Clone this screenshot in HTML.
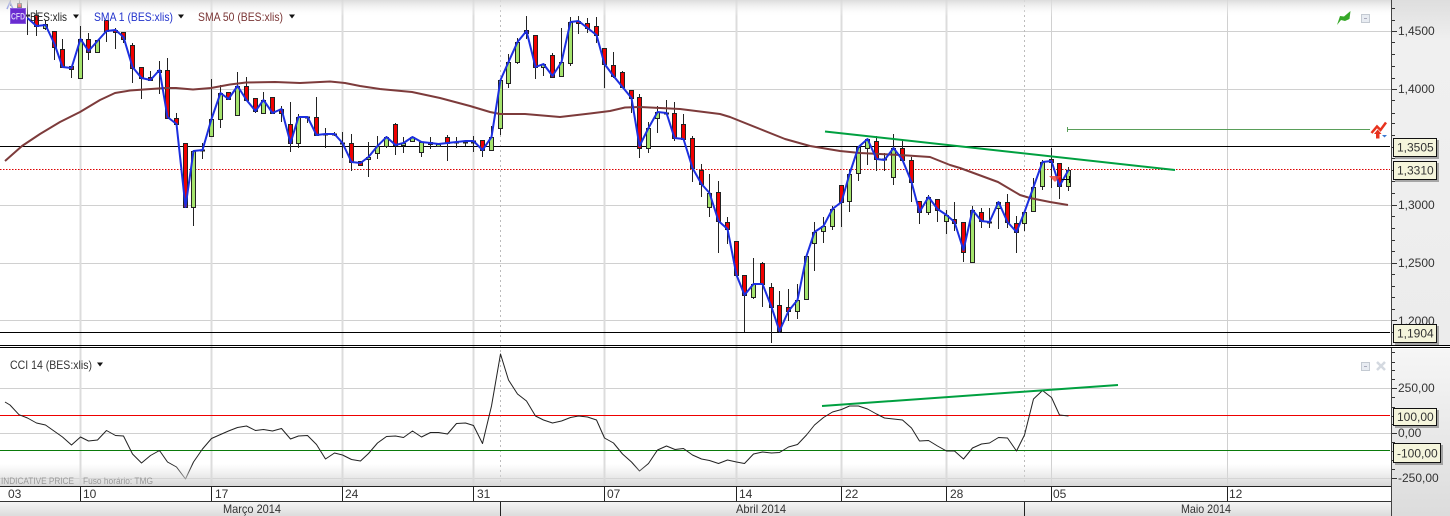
<!DOCTYPE html>
<html><head><meta charset="utf-8"><style>
html,body{margin:0;padding:0;background:#fff;width:1450px;height:516px;overflow:hidden}
svg{display:block}
text{font-family:"Liberation Sans",sans-serif;font-size:12px;fill:#333}
</style></head><body>
<svg width="1450" height="516" viewBox="0 0 1450 516" xmlns="http://www.w3.org/2000/svg">
<defs>
<linearGradient id="top" x1="0" y1="0" x2="0" y2="1"><stop offset="0" stop-color="#d8d8d8" stop-opacity=".9"/><stop offset="1" stop-color="#fff" stop-opacity="0"/></linearGradient>
<linearGradient id="bot" x1="0" y1="0" x2="0" y2="1"><stop offset="0" stop-color="#ddd" stop-opacity="0"/><stop offset="1" stop-color="#d6d6d6" stop-opacity=".95"/></linearGradient>
<linearGradient id="mon" x1="0" y1="0" x2="0" y2="1"><stop offset="0" stop-color="#f4f4f4"/><stop offset="1" stop-color="#dcdcdc"/></linearGradient>
<linearGradient id="ax1" x1="0" y1="0" x2="0" y2="1"><stop offset="0" stop-color="#dedede"/><stop offset=".12" stop-color="#f0f0f0"/><stop offset="1" stop-color="#ececec"/></linearGradient>
<linearGradient id="ax2" x1="0" y1="0" x2="0" y2="1"><stop offset="0" stop-color="#f6f6f6"/><stop offset="1" stop-color="#dcdcdc"/></linearGradient>
</defs>
<rect width="1450" height="516" fill="#fff"/>
<rect x="1392" y="0" width="58" height="345" fill="url(#ax1)"/>
<rect x="1392" y="349" width="58" height="167" fill="url(#ax2)"/>

<!-- grid -->
<path d="M0 31.5H1391M0 89.5H1391M0 205.5H1391M0 263.5H1391M0 320.5H1391M0 388.5H1391M0 433.5H1391M0 478.5H1391" stroke="#d0d0d0" fill="none"/>
<path d="M80.5 0V486M211.5 0V486M342.5 0V486M473.5 0V486M604.5 0V486M736.5 0V486M841.5 0V486M946.5 0V486" stroke="#dcdcdc" stroke-width="2" fill="none"/>
<path d="M1051.5 0V486M1227.5 0V486" stroke="#d0d0d0" fill="none"/>
<path d="M500.5 0V486M1024.5 0V486" stroke="#bbb" stroke-dasharray="2 3" fill="none"/>

<!-- horizontal levels -->
<path d="M0 146.5H1390M0 332.5H1390" stroke="#000" fill="none"/>
<path d="M0 169.5H1390" stroke="#d00" stroke-dasharray="1.5 1.5" fill="none"/>
<path d="M0 415.5H1390" stroke="#e00" fill="none"/>
<path d="M0 450.5H1390" stroke="#0a7a0a" fill="none"/>

<!-- wicks -->
<path stroke="#222" fill="none" d="M10.5 0V6M19.5 0V10M27.5 0V35M36.5 10V36M45.5 20V30M54.5 31V60M62.5 39V67M71.5 66V78M80.5 26V78M88.5 33V60M97.5 40V52M106.5 20V42M115.5 28V49M123.5 32V43M132.5 43V83M141.5 67V99M150.5 71V80M159.5 61V94M167.5 58V118M176.5 113V124M185.5 143V207M193.5 151V226M202.5 143V159M211.5 79V136M220.5 85V128M228.5 92V100M237.5 72V115M246.5 77V100M255.5 98V113M263.5 92V113M272.5 97V113M281.5 106V122M290.5 102V152M298.5 114V148M307.5 117V123M316.5 97V135M325.5 128V148M334.5 132V136M342.5 132V158M351.5 134V171M360.5 161V166M368.5 142V177M377.5 136V159M386.5 136V148M395.5 123V155M403.5 137V153M412.5 137V141M421.5 142V157M430.5 137V149M438.5 144V147M447.5 135V161M456.5 137V148M465.5 140V146M473.5 136V152M482.5 140V157M491.5 126V150M500.5 80V135M508.5 54V88M517.5 38V64M526.5 16V39M535.5 35V79M543.5 64V76M552.5 53V77M561.5 28V76M570.5 17V66M578.5 16V34M587.5 18V33M596.5 17V43M604.5 48V88M613.5 52V78M622.5 71V87M631.5 90V113M639.5 94V158M648.5 122V153M657.5 106V133M666.5 100V115M674.5 102V141M683.5 114V139M692.5 136V182M701.5 164V197M709.5 174V217M718.5 181V253M727.5 217V244M736.5 241V275M744.5 275V332M753.5 258V299M762.5 262V307M771.5 283V343M779.5 291V333M788.5 289V321M797.5 284V319M806.5 256V299M814.5 222V271M823.5 217V243M832.5 206V230M841.5 185V227M849.5 169V212M858.5 147V181M867.5 139V165M876.5 136V171M884.5 153V171M893.5 134V185M902.5 141V160M911.5 157V202M919.5 201V224M928.5 195V215M937.5 199V222M946.5 210V234M954.5 202V231M963.5 222V262M972.5 206V263M981.5 208V228M989.5 208V228M998.5 202V229M1007.5 194V228M1016.5 216V253M1024.5 212V231M1033.5 178V211M1042.5 160V190M1051.5 148V188M1059.5 163V199M1068.5 167V191"/>

<!-- red bodies -->
<path stroke="#222" fill="#f00000" d="M17.5 3.5h4v4h-4zM34.5 15.5h4v11h-4zM52.5 31.5h4v16h-4zM60.5 49.5h4v18h-4zM69.5 66.5h4v3h-4zM86.5 39.5h4v13h-4zM104.5 20.5h4v11h-4zM113.5 30.5h4v2h-4zM121.5 32.5h4v7h-4zM130.5 45.5h4v23h-4zM139.5 67.5h4v11h-4zM148.5 77.5h4v3h-4zM165.5 70.5h4v48h-4zM174.5 118.5h4v6h-4zM183.5 143.5h4v64h-4zM226.5 92.5h4v7h-4zM244.5 86.5h4v14h-4zM253.5 98.5h4v13h-4zM270.5 97.5h4v16h-4zM279.5 109.5h4v4h-4zM288.5 124.5h4v19h-4zM314.5 117.5h4v18h-4zM349.5 143.5h4v19h-4zM358.5 161.5h4v4h-4zM393.5 124.5h4v21h-4zM428.5 142.5h4v2h-4zM445.5 137.5h4v6h-4zM480.5 140.5h4v10h-4zM524.5 30.5h4v3h-4zM533.5 35.5h4v32h-4zM550.5 55.5h4v22h-4zM576.5 21.5h4v2h-4zM585.5 23.5h4v5h-4zM594.5 26.5h4v9h-4zM602.5 48.5h4v16h-4zM611.5 65.5h4v11h-4zM620.5 72.5h4v15h-4zM629.5 90.5h4v8h-4zM637.5 97.5h4v51h-4zM672.5 113.5h4v25h-4zM681.5 124.5h4v15h-4zM690.5 138.5h4v30h-4zM699.5 170.5h4v14h-4zM716.5 192.5h4v29h-4zM725.5 222.5h4v7h-4zM734.5 241.5h4v34h-4zM742.5 275.5h4v20h-4zM760.5 263.5h4v21h-4zM769.5 287.5h4v20h-4zM777.5 305.5h4v26h-4zM786.5 307.5h4v4h-4zM839.5 185.5h4v17h-4zM874.5 141.5h4v18h-4zM900.5 148.5h4v12h-4zM909.5 160.5h4v22h-4zM917.5 201.5h4v11h-4zM935.5 199.5h4v11h-4zM952.5 219.5h4v4h-4zM961.5 222.5h4v30h-4zM979.5 212.5h4v9h-4zM1005.5 202.5h4v20h-4zM1014.5 223.5h4v9h-4zM1049.5 159.5h4v3h-4zM1057.5 163.5h4v23h-4z"/>

<!-- green bodies -->
<path stroke="#222" fill="#a4e46c" d="M43.5 24.5h4v4h-4zM78.5 39.5h4v39h-4zM95.5 40.5h4v12h-4zM157.5 70.5h4v2h-4zM191.5 151.5h4v56h-4zM209.5 119.5h4v17h-4zM218.5 93.5h4v26h-4zM235.5 86.5h4v29h-4zM261.5 100.5h4v13h-4zM296.5 117.5h4v26h-4zM366.5 157.5h4v2h-4zM375.5 146.5h4v7h-4zM384.5 137.5h4v9h-4zM401.5 143.5h4v2h-4zM410.5 137.5h4v4h-4zM419.5 142.5h4v10h-4zM436.5 144.5h4v2h-4zM489.5 137.5h4v13h-4zM498.5 80.5h4v48h-4zM506.5 62.5h4v21h-4zM515.5 42.5h4v20h-4zM541.5 64.5h4v3h-4zM559.5 62.5h4v14h-4zM568.5 22.5h4v41h-4zM646.5 128.5h4v20h-4zM655.5 112.5h4v6h-4zM707.5 193.5h4v14h-4zM751.5 284.5h4v13h-4zM795.5 300.5h4v11h-4zM804.5 256.5h4v43h-4zM812.5 232.5h4v11h-4zM821.5 226.5h4v5h-4zM830.5 209.5h4v17h-4zM847.5 174.5h4v27h-4zM856.5 147.5h4v26h-4zM865.5 139.5h4v9h-4zM891.5 148.5h4v29h-4zM926.5 197.5h4v15h-4zM944.5 215.5h4v6h-4zM970.5 210.5h4v52h-4zM996.5 202.5h4v6h-4zM1022.5 212.5h4v11h-4zM1031.5 187.5h4v24h-4zM1040.5 162.5h4v24h-4zM1066.5 170.5h4v16h-4z"/>

<!-- small neutral bodies -->
<path stroke="#222" fill="#333" d="M305.5 117h4v1h-4zM323.5 134h4v1h-4zM332.5 134h4v1h-4zM340.5 143h4v1h-4zM454.5 142h4v1h-4zM463.5 141h4v2h-4zM471.5 141h4v2h-4zM664.5 113h4v1h-4zM882.5 159h4v1h-4zM987.5 222h4v1h-4zM200.5 150h4v1h-4zM25.5 15h4v1h-4z"/>

<!-- SMA 50 -->
<polyline fill="none" stroke="#7d3b3b" stroke-width="2" stroke-linejoin="round" points="5,161 22,146 40,134 60,122 80,112 100,100 115,93 130,90.5 165,88 176,88 193,89.5 211,88 230,84.5 246,82.5 275,82 300,83 330,81.5 345,83 360,86 380,89 412,92 440,98 470,106 490,112 500,114 525,114 560,117 590,113.5 610,111 625,107.5 640,107 680,109 720,114 730,117 760,129 785,139 810,146 840,151 860,153 900,155 930,157 950,165 960,168 998,182 1020,195 1030,198 1050,202 1068,205"/>

<!-- SMA 1 -->
<polyline fill="none" stroke="#1c2fe0" stroke-width="2" stroke-linejoin="round" points="27.5,18 36.5,26 45.5,25 54.5,44 62.5,67 71.5,68 80.5,39 88.5,51 97.5,41 106.5,31 115.5,30 123.5,37 132.5,67 141.5,78 150.5,80 159.5,70 167.5,117 176.5,124 185.5,207 193.5,151 202.5,150 211.5,119 220.5,93 228.5,99 237.5,86 246.5,100 255.5,111 263.5,100 272.5,113 281.5,109 290.5,143 298.5,117 307.5,117 316.5,135 325.5,134 334.5,134 342.5,143 351.5,162 360.5,163 368.5,157 377.5,146 386.5,137 395.5,145 403.5,143 412.5,137 421.5,142 430.5,143 438.5,144 447.5,143 456.5,142 465.5,141 473.5,141 482.5,150 491.5,137 500.5,80 508.5,62 517.5,42 526.5,31 535.5,67 543.5,64 552.5,76 561.5,62 570.5,22 578.5,21 587.5,28 596.5,35 604.5,64 613.5,76 622.5,87 631.5,98 639.5,146 648.5,128 657.5,112 666.5,113 674.5,138 683.5,139 692.5,168 701.5,184 709.5,193 718.5,221 727.5,229 736.5,275 744.5,295 753.5,284 762.5,284 771.5,307 779.5,331 788.5,311 797.5,300 806.5,256 814.5,232 823.5,226 832.5,209 841.5,202 849.5,174 858.5,147 867.5,139 876.5,159 884.5,160 893.5,148 902.5,160 911.5,182 919.5,212 928.5,197 937.5,209 946.5,215 954.5,222 963.5,250 972.5,210 981.5,221 989.5,222 998.5,202 1007.5,222 1016.5,232 1024.5,212 1033.5,187 1042.5,162 1051.5,161 1059.5,186 1068.5,170"/>
<polyline fill="none" stroke="#5c6fe0" stroke-width="1.5" points="7,9 10,2 13,9"/>

<!-- CCI -->
<polyline fill="none" stroke="#222" stroke-width="1" stroke-linejoin="round" points="5,402 10,405 19,414.7 27.5,418 36.5,423 45.5,425 54,431 62.5,437 71.5,445 80.5,437 88.5,441 97.5,440 106.5,430.5 115.5,435.5 123.5,436 132.5,454 141.5,463 150.5,455.5 159.5,450.5 167.5,462 176.5,467 185.5,479 193.5,462 202.5,449 211.5,438.5 220.5,434.5 228.5,431 237.5,427.5 246.5,426 255.5,430.5 263.5,429.5 272.5,431 281.5,428.5 290.5,439 298.5,436 307.5,435.5 316.5,444.5 325.5,459 334.5,453 342.5,455 351.5,459.5 360.5,461 368.5,453.5 377.5,443 386.5,436.5 395.5,436 403.5,437.5 412.5,431 421.5,437 430.5,432.5 438.5,432.5 447.5,434 456.5,423.5 465.5,423 473.5,425.5 482.5,443.5 491.5,406 500.5,354 508.5,380 517.5,394 526.5,401 535.5,416 543.5,420 552.5,423 561.5,421 570.5,417.5 578.5,416 587.5,417 596.5,420 604.5,438 613.5,443 622.5,454 631.5,462 639.5,471 648.5,463.5 657.5,450 666.5,446 675,449.5 683.5,448.5 692.5,455 701.5,459 709.5,460.5 718.5,463.5 727.5,460 736.5,462 744.5,463.5 753.5,454 762.5,452 771.5,453 779.5,452.5 788.5,447 797.5,444.5 806.5,435 814.5,425 823.5,417.5 832.5,412 841.5,409.5 849.5,406 858.5,406 867.5,409 876.5,414 884.5,418 893.5,419 902.5,420 911.5,428 919.5,441 928.5,440.5 937.5,446 946.5,451 954.5,451 963.5,459 972.5,448 981.5,444 989.5,443 998.5,437.5 1007.5,438 1016.5,451 1024.5,435 1033.5,399 1042.5,390.5 1051.5,397.5 1059.5,415 1068.5,416"/>

<!-- trend lines -->
<path d="M825 131.5L1175 170M822 406L1118 385" stroke="#00a040" stroke-width="2" fill="none"/>
<path d="M1067.5 127V132M1067 129.5H1370" stroke="#5a9f5a" fill="none"/>

<!-- marker on last candles -->
<path d="M1049 176H1061L1055 182Z" fill="#f04030" fill-opacity=".8"/>
<path d="M1062 179.5H1069M1069.5 176V183" stroke="#000" fill="none"/>

<!-- top and bottom overlays -->
<rect x="0" y="0" width="1391" height="17" fill="url(#top)"/>
<rect x="0" y="464" width="1391" height="22" fill="url(#bot)"/>

<!-- separators -->
<rect x="0" y="345" width="1450" height="1" fill="#000"/>
<rect x="0" y="347" width="1450" height="1" fill="#000"/>
<rect x="0" y="486" width="1391" height="1" fill="#222"/>
<rect x="0" y="487" width="1391" height="14" fill="#fff"/>
<rect x="0" y="502" width="1391" height="14" fill="url(#mon)"/>
<rect x="0" y="501" width="1391" height="1" fill="#333"/>
<path d="M80.5 487V501M211.5 487V501M342.5 487V501M473.5 487V501M604.5 487V501M736.5 487V501M841.5 487V501M946.5 487V501M1051.5 487V501M1227.5 487V501M500.5 502V516M1024.5 502V516" stroke="#222" fill="none"/>

<!-- axis -->
<path d="M1391.5 0V345M1391.5 348V516" stroke="#444" fill="none"/>
<path stroke="#333" fill="none" d="M1392 8.5h3M1392 20.5h3M1392 31.5h5M1392 42.5h3M1392 54.5h3M1392 66.5h3M1392 78.5h3M1392 89.5h5M1392 100.5h3M1392 113.5h3M1392 123.5h3M1392 135.5h3M1392 147.5h5M1392 158.5h3M1392 170.5h3M1392 181.5h3M1392 193.5h3M1392 205.5h5M1392 216.5h3M1392 228.5h3M1392 240.5h3M1392 251.5h3M1392 263.5h5M1392 274.5h3M1392 286.5h3M1392 297.5h3M1392 309.5h3M1392 320.5h5M1392 332.5h3M1392 352.5h3M1392 362.5h3M1392 370.5h3M1392 379.5h3M1392 388.5h5M1392 397.5h3M1392 407.5h3M1392 416.5h3M1392 424.5h3M1392 433.5h5M1392 442.5h3M1392 451.5h3M1392 460.5h3M1392 469.5h3M1392 478.5h5"/>
<g style="font-size:11.5px">
<text x="1398" y="35">1,4500</text>
<text x="1398" y="93">1,4000</text>
<text x="1398" y="209">1,3000</text>
<text x="1398" y="267">1,2500</text>
<text x="1398" y="325">1,2000</text>
<text x="1398" y="392">250,00</text>
<text x="1398" y="437">0,00</text>
<text x="1398" y="482">-250,00</text>
</g>

<!-- tooltips -->
<g fill="#888" opacity=".7">
<rect x="1395" y="140" width="44" height="19"/>
<rect x="1395" y="163" width="44" height="19"/>
<rect x="1395" y="326" width="44" height="19"/>
<rect x="1395" y="410" width="44" height="18"/>
<rect x="1395" y="445" width="48" height="20"/>
</g>
<g fill="#f5f5dc" stroke="#111">
<rect x="1393.5" y="138.5" width="43" height="18"/>
<rect x="1393.5" y="161.5" width="43" height="18"/>
<rect x="1393.5" y="324.5" width="43" height="18"/>
<rect x="1393.5" y="408.5" width="43" height="17"/>
<rect x="1393.5" y="443.5" width="47" height="19"/>
</g>
<g style="font-size:11.5px">
<text x="1397" y="151.500">1,3505</text>
<text x="1397" y="174.500">1,3310</text>
<text x="1397" y="337.500">1,1904</text>
<text x="1397" y="421">100,00</text>
<text x="1397" y="457.500">-100,00</text>
</g>

<!-- legend -->
<rect x="10.500" y="8.500" width="15" height="15" fill="#6a2bd0" stroke="#8a5be0"/>
<text x="11" y="19.500" style="font-size:9px;fill:#d8ccf8;font-weight:bold" textLength="14" lengthAdjust="spacingAndGlyphs">CFD</text>
<text x="30" y="21" textLength="37" lengthAdjust="spacingAndGlyphs" style="fill:#222">BES:xlis</text>
<path d="M73 14.500h6l-3 4z" fill="#111"/>
<text x="94" y="21" textLength="79" lengthAdjust="spacingAndGlyphs" style="fill:#2233cc">SMA 1 (BES:xlis)</text>
<path d="M178 14.500h6l-3 4z" fill="#111"/>
<text x="198" y="21" textLength="85" lengthAdjust="spacingAndGlyphs" style="fill:#7a3535">SMA 50 (BES:xlis)</text>
<path d="M289 14.500h6l-3 4z" fill="#111"/>
<text x="10" y="369" textLength="82" lengthAdjust="spacingAndGlyphs" style="fill:#333">CCI 14 (BES:xlis)</text>
<path d="M97 362.500h6l-3 4z" fill="#111"/>

<!-- status text -->
<text x="1" y="484" style="font-size:9px;fill:#999" textLength="73" lengthAdjust="spacingAndGlyphs">INDICATIVE PRICE</text>
<text x="83" y="484" style="font-size:9px;fill:#999" textLength="70" lengthAdjust="spacingAndGlyphs">Fuso horário: TMG</text>

<!-- dates -->
<g style="fill:#333">
<text x="8" y="498">03</text>
<text x="83" y="498">10</text>
<text x="215" y="498">17</text>
<text x="345" y="498">24</text>
<text x="477" y="498">31</text>
<text x="607" y="498">07</text>
<text x="739" y="498">14</text>
<text x="845" y="498">22</text>
<text x="950" y="498">28</text>
<text x="1053" y="498">05</text>
<text x="1229" y="498">12</text>
<text x="223" y="513" textLength="58" lengthAdjust="spacingAndGlyphs">Março 2014</text>
<text x="736" y="513" textLength="50" lengthAdjust="spacingAndGlyphs">Abril 2014</text>
<text x="1181" y="513" textLength="50" lengthAdjust="spacingAndGlyphs">Maio 2014</text>
</g>

<!-- icons -->
<path d="M1337 25L1340 16L1344 16.500L1350.500 11L1349.500 19L1345 21L1341 20Z" fill="#36a828"/>
<g fill="#e8ecf2" stroke="#c4cad2"><rect x="1361.500" y="14.500" width="8" height="8"/><rect x="1361.500" y="362.500" width="8" height="8"/></g>
<path d="M1364 18.500h3M1364 366.500h3" stroke="#aab" fill="none"/>
<path d="M1377 362L1385 370M1385 362L1377 370" stroke="#d4d9e0" stroke-width="2.500" fill="none"/>
<path d="M1371.500 133L1377 126.500L1380.500 130L1386 122.500" stroke="#e8331e" stroke-width="2.500" fill="none"/>
<path d="M1377.700 129.500L1381.500 134H1379.500V138.500H1376V134H1374Z" fill="#e8331e"/>
<path d="M1382 135H1387L1384.500 137.500Z" fill="#3a78d0"/>
</svg>
</body></html>
